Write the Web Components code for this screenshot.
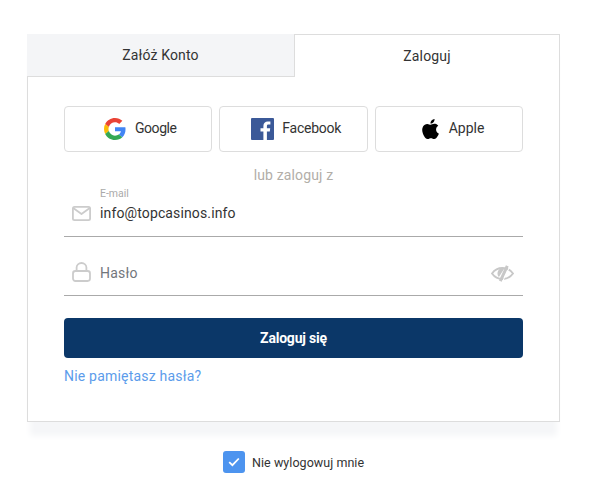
<!DOCTYPE html>
<html lang="pl">
<head>
<meta charset="utf-8">
<title>Zaloguj</title>
<style>
  html, body { margin: 0; background: #fff; }
  body { font-family: Roboto, "Liberation Sans", sans-serif; color: #333; }
</style>
</head>
<body>
<login-page>
  <login-card>
    <login-tabs slot="tabs" left="Załóż Konto" right="Zaloguj"></login-tabs>
    <social-row>
      <social-button name="google" label="Google" style="--pad:39px;--gap:9px;--ls:-.45px"></social-button>
      <social-button name="facebook" label="Facebook" style="--pad:31px;--gap:8px;--ls:-.25px"></social-button>
      <social-button name="apple" label="Apple" style="--pad:46px;--gap:10px;--ls:0"></social-button>
    </social-row>
    <or-line>lub zaloguj z</or-line>
    <login-field icon="mail" label="E-mail" value="info@topcasinos.info"></login-field>
    <login-field icon="lock" placeholder="Hasło" eye></login-field>
    <submit-button>Zaloguj się</submit-button>
    <forgot-link>Nie pamiętasz hasła?</forgot-link>
  </login-card>
  <remember-me>Nie wylogowuj mnie</remember-me>
</login-page>

<script>
const ICONS = {
  google: `<svg width="22" height="22" viewBox="0 0 48 48">
    <path fill="#EA4335" d="M24 9.5c3.54 0 6.71 1.22 9.21 3.6l6.85-6.85C35.9 2.38 30.47 0 24 0 14.62 0 6.51 5.38 2.56 13.22l7.98 6.19C12.43 13.72 17.74 9.5 24 9.5z"/>
    <path fill="#4285F4" d="M46.98 24.55c0-1.57-.15-3.09-.38-4.55H24v9.02h12.94c-.58 2.96-2.26 5.48-4.78 7.18l7.73 6c4.51-4.18 7.09-10.36 7.09-17.65z"/>
    <path fill="#FBBC05" d="M10.53 28.59c-.48-1.45-.76-2.99-.76-4.59s.27-3.14.76-4.59l-7.98-6.19C.92 16.46 0 20.12 0 24c0 3.88.92 7.54 2.56 10.78l7.97-6.19z"/>
    <path fill="#34A853" d="M24 48c6.48 0 11.93-2.13 15.89-5.81l-7.73-6c-2.15 1.45-4.92 2.3-8.16 2.3-6.26 0-11.57-4.22-13.47-9.91l-7.98 6.19C6.51 42.62 14.62 48 24 48z"/>
  </svg>`,
  facebook: `<svg width="23" height="22" viewBox="0 0 23 22">
    <rect width="23" height="22" rx="1" fill="#3b5998"/>
    <path fill="#fff" d="M15.9 22v-8.5h2.9l.4-3.3h-3.3V8.1c0-1 .3-1.6 1.7-1.6h1.8V3.5c-.3 0-1.4-.1-2.6-.1-2.6 0-4.4 1.6-4.4 4.5v2.3H9.5v3.3h2.9V22z"/>
  </svg>`,
  apple: `<svg width="17" height="20" viewBox="2 0 20 24" preserveAspectRatio="none">
    <path fill="#000" d="M12.152 6.896c-.948 0-2.415-1.078-3.96-1.04-2.04.027-3.91 1.183-4.961 3.014-2.117 3.675-.546 9.103 1.519 12.09 1.013 1.454 2.208 3.09 3.792 3.039 1.52-.065 2.09-.987 3.935-.987 1.831 0 2.35.987 3.96.948 1.637-.026 2.676-1.48 3.676-2.948 1.156-1.688 1.636-3.325 1.662-3.415-.039-.013-3.182-1.221-3.22-4.857-.026-3.04 2.48-4.494 2.597-4.559-1.429-2.09-3.623-2.324-4.39-2.376-2-.156-3.675 1.09-4.61 1.09zM15.53 3.83c.843-1.012 1.4-2.427 1.245-3.83-1.207.052-2.662.805-3.532 1.818-.78.896-1.454 2.338-1.273 3.714 1.338.104 2.715-.688 3.559-1.701"/>
  </svg>`,
  mail: `<svg width="19" height="15" viewBox="0 0 19 15" fill="none" stroke="#ccc" stroke-width="1.8" stroke-linejoin="round">
    <rect x=".9" y=".9" width="17.2" height="13.2" rx="1.6"/>
    <path d="M1.200 2l8.300 6 8.300-6"/>
  </svg>`,
  lock: `<svg width="19" height="20" viewBox="0 0 19 20" fill="none" stroke="#ccc" stroke-width="1.8">
    <rect x="1" y="9" width="17" height="10" rx="2.4"/>
    <path d="M4.600 9V5.600a4.900 4.600 0 0 1 9.800 0V9"/>
  </svg>`,
  eye: `<svg width="23" height="17" viewBox="0 0 23 17" fill="none" stroke="#c8c8c8">
    <path stroke-width="1.9" d="M1 8.500C3.500 5 7 3 11.500 3S19.500 5 22 8.500C19.500 12 16 14 11.500 14S3.500 12 1 8.500z"/>
    <path fill="#c8c8c8" stroke="none" d="M11.500 3c-3 0-5 2.500-5 5.500 0 1.500.5 2.700 1.400 3.600L13.500 3.300c-.6-.2-1.300-.3-2-.3z"/>
    <path stroke-width="3" d="M16.300 .8L9.300 16.200"/>
    <path stroke="#fff" stroke-width="1" d="M18.300 2.500L12 15.500"/>
  </svg>`
};

class LoginPage extends HTMLElement {
  connectedCallback() {
    if (this.shadowRoot) return;
    this.attachShadow({ mode: "open" }).innerHTML = `
      <style>
        :host {
          display: block;
          box-sizing: border-box;
          height: 488px;
          padding-top: 34px;
          overflow: hidden;
        }
      </style>
      <slot></slot>
    `;
  }
}

class LoginCard extends HTMLElement {
  connectedCallback() {
    if (this.shadowRoot) return;
    this.attachShadow({ mode: "open" }).innerHTML = `
      <style>
        :host {
          display: block;
          width: 533px;
          margin-left: 27px;
          box-shadow: 0 17px 6px -3px #f5f6f8;
        }
        .body {
          background: #fff;
          border: 1px solid #ddd;
          border-top: 0;
          padding: 29px 36px 35px;
        }
      </style>
      <slot name="tabs"></slot>
      <div class="body"><slot></slot></div>
    `;
  }
}

class LoginTabs extends HTMLElement {
  connectedCallback() {
    if (this.shadowRoot) return;
    this.attachShadow({ mode: "open" }).innerHTML = `
      <style>
        :host {
          display: grid;
          grid-template-columns: 268px 265px;
          font-size: 14px;
          letter-spacing: .15px;
          color: #333;
        }
        div {
          display: flex;
          align-items: center;
          justify-content: center;
          box-sizing: border-box;
          height: 43px;
          padding-bottom: 1px;
          background: #fff;
        }
        .off {
          background: #f4f5f7;
          border-right: 1px solid #ddd;
          border-bottom: 1px solid #ddd;
        }
        .on {
          border-top: 1px solid #ddd;
          border-right: 1px solid #ddd;
        }
      </style>
      <div class="off">${this.getAttribute("left")}</div>
      <div class="on">${this.getAttribute("right")}</div>
    `;
  }
}

class SocialRow extends HTMLElement {
  connectedCallback() {
    if (this.shadowRoot) return;
    this.attachShadow({ mode: "open" }).innerHTML = `
      <style>
        :host {
          display: grid;
          grid-template-columns: repeat(3, 1fr);
          gap: 7px;
        }
      </style>
      <slot></slot>
    `;
  }
}

class SocialButton extends HTMLElement {
  connectedCallback() {
    if (this.shadowRoot) return;
    const name = this.getAttribute("name");
    this.attachShadow({ mode: "open" }).innerHTML = `
      <style>
        :host {
          display: flex;
          align-items: center;
          box-sizing: border-box;
          height: 46px;
          padding-left: var(--pad, 30px);
          border: 1px solid #ddd;
          border-radius: 4px;
          font-size: 14px;
          color: #333;
        }
        svg { display: block; }
        span {
          margin-left: var(--gap, 9px);
          margin-bottom: 2px;
          letter-spacing: var(--ls, 0);
        }
      </style>
      ${ICONS[name]}
      <span>${this.getAttribute("label")}</span>
    `;
  }
}

class OrLine extends HTMLElement {
  connectedCallback() {
    if (this.shadowRoot) return;
    this.attachShadow({ mode: "open" }).innerHTML = `
      <style>
        :host {
          display: block;
          margin: 14px 0 4px;
          text-align: center;
          font-size: 14px;
          line-height: 18px;
          letter-spacing: .15px;
          color: #b2aea8;
        }
      </style>
      <slot></slot>
    `;
  }
}

class LoginField extends HTMLElement {
  connectedCallback() {
    if (this.shadowRoot) return;
    const label = this.getAttribute("label");
    const value = this.getAttribute("value");
    const placeholder = this.getAttribute("placeholder");
    this.attachShadow({ mode: "open" }).innerHTML = `
      <style>
        :host {
          display: flex;
          align-items: flex-end;
          padding: 0 9px 13px;
          border-bottom: 1px solid #aaa;
          font-size: 14px;
          line-height: 20px;
        }
        :host([eye]) {
          height: 32px;
          padding: 26px 9px 0 9px;
          align-items: flex-start;
        }
        .icon { display: flex; width: 27px; flex: none; margin-left: -1px; margin-right: 1px; padding-bottom: 2px; }
        :host([eye]) .icon { padding-bottom: 0; margin-top: -1px; }
        .text { flex: 1; }
        small { display: block; font-size: 10.5px; line-height: 12px; margin-bottom: 3px; color: #aaa; }
        .value { color: #333; letter-spacing: .13px; }
        .placeholder { color: #72767c; letter-spacing: .2px; }
        .eye { margin-top: 2px; }
      </style>
      <div class="icon">${ICONS[this.getAttribute("icon")]}</div>
      <div class="text">
        ${label ? `<small>${label}</small>` : ""}
        ${value ? `<div class="value">${value}</div>` : ""}
        ${placeholder ? `<div class="placeholder">${placeholder}</div>` : ""}
      </div>
      ${this.hasAttribute("eye") ? `<div class="eye">${ICONS.eye}</div>` : ""}
    `;
  }
}

class SubmitButton extends HTMLElement {
  connectedCallback() {
    if (this.shadowRoot) return;
    this.attachShadow({ mode: "open" }).innerHTML = `
      <style>
        :host {
          display: flex;
          align-items: center;
          justify-content: center;
          height: 40px;
          margin-top: 22px;
          background: #0b3768;
          border-radius: 4px;
          color: #fff;
          font-size: 14px;
          font-weight: 700;
          letter-spacing: -.2px;
        }
      </style>
      <slot></slot>
    `;
  }
}

class ForgotLink extends HTMLElement {
  connectedCallback() {
    if (this.shadowRoot) return;
    this.attachShadow({ mode: "open" }).innerHTML = `
      <style>
        :host {
          display: block;
          margin-top: 8px;
          font-size: 14px;
          line-height: 20px;
          letter-spacing: .2px;
          color: #5c9ceb;
        }
      </style>
      <slot></slot>
    `;
  }
}

class RememberMe extends HTMLElement {
  connectedCallback() {
    if (this.shadowRoot) return;
    this.attachShadow({ mode: "open" }).innerHTML = `
      <style>
        :host {
          display: flex;
          align-items: center;
          gap: 7px;
          margin: 29px 0 0 223px;
          font-size: 12.5px;
          letter-spacing: .05px;
          color: #333;
        }
        .box {
          display: flex;
          align-items: center;
          justify-content: center;
          width: 22px;
          height: 22px;
          border-radius: 3px;
          background: #4d94ef;
        }
      </style>
      <div class="box">
        <svg width="12" height="10" viewBox="0 0 12 10" fill="none" stroke="#fff" stroke-width="1.8"><path d="M1.200 5.200l3.200 3L10.800 1.500"/></svg>
      </div>
      <slot></slot>
    `;
  }
}

customElements.define("login-page", LoginPage);
customElements.define("login-card", LoginCard);
customElements.define("login-tabs", LoginTabs);
customElements.define("social-row", SocialRow);
customElements.define("social-button", SocialButton);
customElements.define("or-line", OrLine);
customElements.define("login-field", LoginField);
customElements.define("submit-button", SubmitButton);
customElements.define("forgot-link", ForgotLink);
customElements.define("remember-me", RememberMe);
</script>
</body>
</html>
